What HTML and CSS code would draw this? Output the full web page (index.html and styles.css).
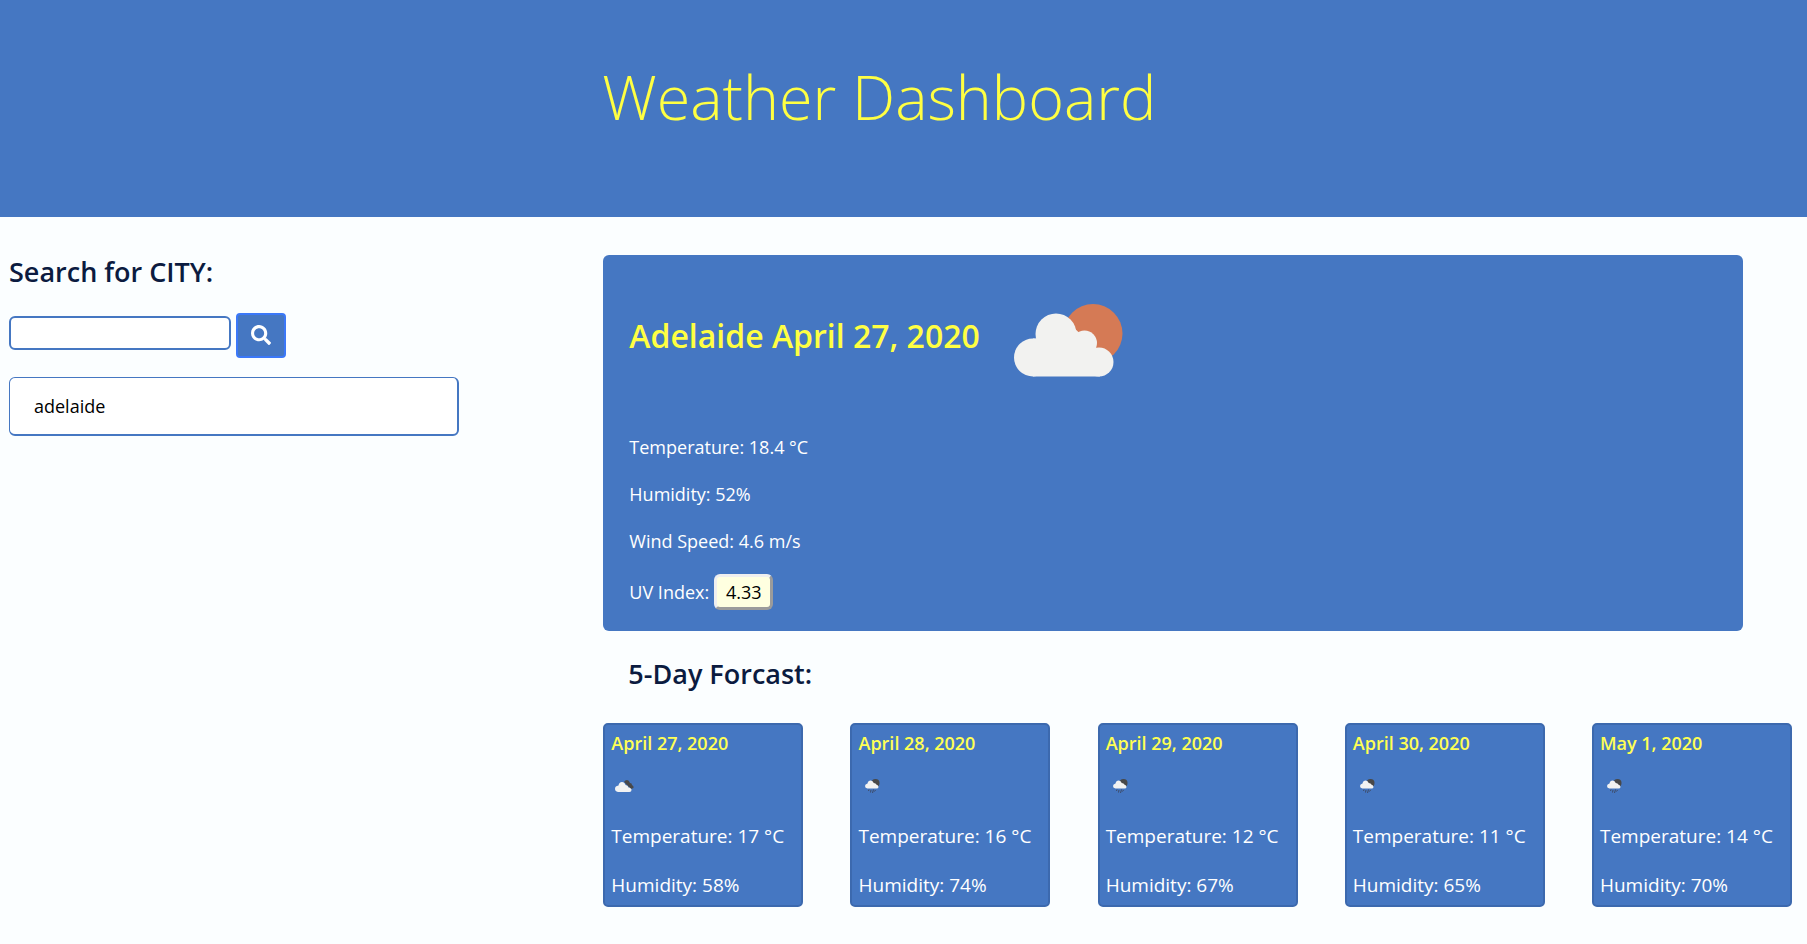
FILE: index.html
```html
<!DOCTYPE html>
<html lang="en">
<head>
<meta charset="utf-8">
<title>Weather Dashboard</title>
<link rel="stylesheet" href="styles.css">
</head>
<body>
<svg class="defs" aria-hidden="true">
  <symbol id="broken-clouds" viewBox="0 0 19 12">
    <path fill="#484849" d="M9 2Q10 0 12 0Q14 0 15 3Q17 3 17 5Q19 6 18.500 8L16 9Z"/>
    <path fill="#f2f2f2" d="M3 12Q0 11.500 0 8.800Q0 6 3.500 5.500Q4 2 7 2Q9.500 2 10.500 5Q13 5 13.500 7.500Q16.500 8 16.500 10Q16.500 12 14.500 12Z"/>
  </symbol>
  <symbol id="rain" viewBox="0 0 15 14">
    <circle fill="#484849" cx="10.500" cy="4" r="4"/>
    <path fill="#f2f2f2" d="M2.500 9.500Q0 9.200 0 7Q0 5 2.500 4.500Q3 1.500 5.700 1.500Q8 1.500 8.700 4Q11 4 11.300 5.500Q13.500 6 13.500 8Q13.500 9.500 11.500 9.500Z"/>
    <path stroke="#3d4a66" stroke-width="1" fill="none" d="M4 10.500L3.500 12M6 11L5.500 13.500M8.500 10.500L7.500 14M10.500 11L9.500 12.500"/>
  </symbol>
</svg>

<header class="banner"><h1 class="title">Weather Dashboard</h1></header>

<main class="layout">
  <section class="search">
    <form class="search-form">
      <label class="heading" for="city">Search for CITY:</label>
      <div class="search-row">
        <input class="city-input" id="city" type="text">
        <button class="search-button" type="button" aria-label="Search">
          <svg class="search-icon" viewBox="0 0 512 512"><path fill="currentColor" d="M505 442.700L405.300 343c-4.500-4.500-10.600-7-17-7H372c27.600-35.300 44-79.700 44-128C416 93.100 322.900 0 208 0S0 93.100 0 208s93.100 208 208 208c48.300 0 92.700-16.400 128-44v16.300c0 6.400 2.500 12.500 7 17l99.700 99.700c9.400 9.400 24.600 9.400 33.900 0l28.300-28.300c9.400-9.400 9.400-24.600.1-34zM208 336c-70.700 0-128-57.200-128-128 0-70.700 57.200-128 128-128 70.700 0 128 57.200 128 128 0 70.700-57.200 128-128 128z"/></svg>
        </button>
      </div>
    </form>
    <ul class="history"><li class="history-item">adelaide</li></ul>
  </section>

  <section class="results">
    <article class="current">
      <div class="current-head">
        <h2 class="current-title">Adelaide April 27, 2020</h2>
        <svg class="current-icon" viewBox="0 0 109 73" role="img" aria-label="Few clouds">
          <circle cx="79" cy="29.500" r="29.500" fill="#d57a55"/>
          <g fill="#f2f2f0">
            <circle cx="42" cy="30" r="20.500"/><circle cx="19" cy="53.500" r="19"/>
            <circle cx="70.500" cy="39" r="12.500"/><circle cx="85" cy="58" r="14.500"/>
            <path d="M19 34.500H24L60 24L82 44L86 72.500H19Z"/>
          </g>
        </svg>
      </div>
      <p class="reading">Temperature: 18.4 °C</p>
      <p class="reading">Humidity: 52%</p>
      <p class="reading">Wind Speed: 4.6 m/s</p>
      <p class="reading">UV Index: <button class="uv" type="button">4.33</button></p>
    </article>

    <h2 class="heading forecast-heading">5-Day Forcast:</h2>
    <div class="forecast">
      <article class="day"><h3 class="day-date">April 27, 2020</h3><svg class="day-icon day-icon-clouds"><use href="#broken-clouds"/></svg><p class="day-text">Temperature: 17 °C</p><p class="day-text">Humidity: 58%</p></article>
      <article class="day"><h3 class="day-date">April 28, 2020</h3><svg class="day-icon"><use href="#rain"/></svg><p class="day-text">Temperature: 16 °C</p><p class="day-text">Humidity: 74%</p></article>
      <article class="day"><h3 class="day-date">April 29, 2020</h3><svg class="day-icon"><use href="#rain"/></svg><p class="day-text">Temperature: 12 °C</p><p class="day-text">Humidity: 67%</p></article>
      <article class="day"><h3 class="day-date">April 30, 2020</h3><svg class="day-icon"><use href="#rain"/></svg><p class="day-text">Temperature: 11 °C</p><p class="day-text">Humidity: 65%</p></article>
      <article class="day"><h3 class="day-date">May 1, 2020</h3><svg class="day-icon"><use href="#rain"/></svg><p class="day-text">Temperature: 14 °C</p><p class="day-text">Humidity: 70%</p></article>
    </div>
  </section>
</main>
</body>
</html>
```
FILE: styles.css
```css
* { box-sizing: border-box; }
body {
  margin: 0;
  background: #fbfeff;
  color: #0b1b40;
  font-family: "Segoe UI", "Open Sans", "Noto Sans", sans-serif;
  font-size: 18px;
  line-height: 28px;
}
h1, h2, h3, p, ul { margin: 0; padding: 0; }
.defs { display: none; }

.banner {
  background: #4577c2;
  padding: 57px 32px 80px 33.333%;
}
.title {
  color: #ffff42;
  font-size: 61px;
  font-weight: 300;
  line-height: 80px;
}

.layout {
  display: grid;
  grid-template-columns: 1fr 2fr;
  padding-top: 38px;
}
.heading {
  display: block;
  font-size: 27px;
  font-weight: 600;
  line-height: 34px;
}

.search { padding-left: 9px; }
.search-row {
  display: flex;
  align-items: center;
  gap: 5px;
  margin: 24px 0 19px;
}
.city-input {
  width: 222px;
  height: 34px;
  margin-bottom: 5px;
  padding: 0 8px;
  border: 2px solid #4577c2;
  border-radius: 6px;
  background: #fff;
  font: inherit;
}
.search-button {
  display: flex;
  align-items: center;
  justify-content: center;
  width: 50px;
  height: 45px;
  padding: 0 0 2px;
  border: 2px solid #3b78f8;
  border-radius: 4px;
  background: #4577c2;
  color: #fff;
}
.search-icon { width: 20px; height: 20px; }
.history {
  width: 450px;
  max-width: 100%;
  list-style: none;
}
.history-item {
  padding: 14px 24px;
  border: 1px solid #4577c2;
  border-right-width: 2px;
  border-bottom-width: 2px;
  border-radius: 6px;
  background: #fff;
  color: #000;
}

.results { padding-left: 1px; }
.current {
  margin-right: 64px;
  padding: 49px 26px 21px;
  border-radius: 6px;
  background: #4577c2;
  color: #fff;
}
.current-head {
  display: flex;
  align-items: center;
  gap: 34px;
  margin-bottom: 56px;
}
.current-title {
  color: #ffff42;
  font-size: 32px;
  font-weight: 600;
  line-height: 40px;
  padding-bottom: 10px;
}
.current-icon { width: 109px; height: 73px; }
.reading { margin-bottom: 19px; }
.reading:last-child { margin-bottom: 0; }
.uv {
  height: 36px;
  padding: 0 9px;
  border: 3px outset #efefef;
  border-radius: 6px;
  background: #ffffe0;
  color: #000;
  font: inherit;
  line-height: 28px;
}
.forecast-heading { margin: 26px 0 32px 25px; }
.forecast {
  display: flex;
  justify-content: space-between;
  padding-right: 15px;
}
.day {
  width: 200px;
  padding: 4px 6px 6px;
  border: 2px solid #3c69ae;
  border-radius: 5px;
  background: #4577c2;
  color: #fff;
}
.day-date {
  color: #ffff54;
  font-size: 18px;
  font-weight: 600;
  line-height: 28px;
}
.day-icon {
  display: block;
  width: 15px;
  height: 14px;
  margin: 22px 0 29px 7px;
}
.day-icon-clouds {
  width: 19px;
  height: 12px;
  margin: 23px 0 30px 4px;
}
.day-text {
  font-size: 19px;
  line-height: 28px;
}
.day-text + .day-text { margin-top: 21px; }
```
